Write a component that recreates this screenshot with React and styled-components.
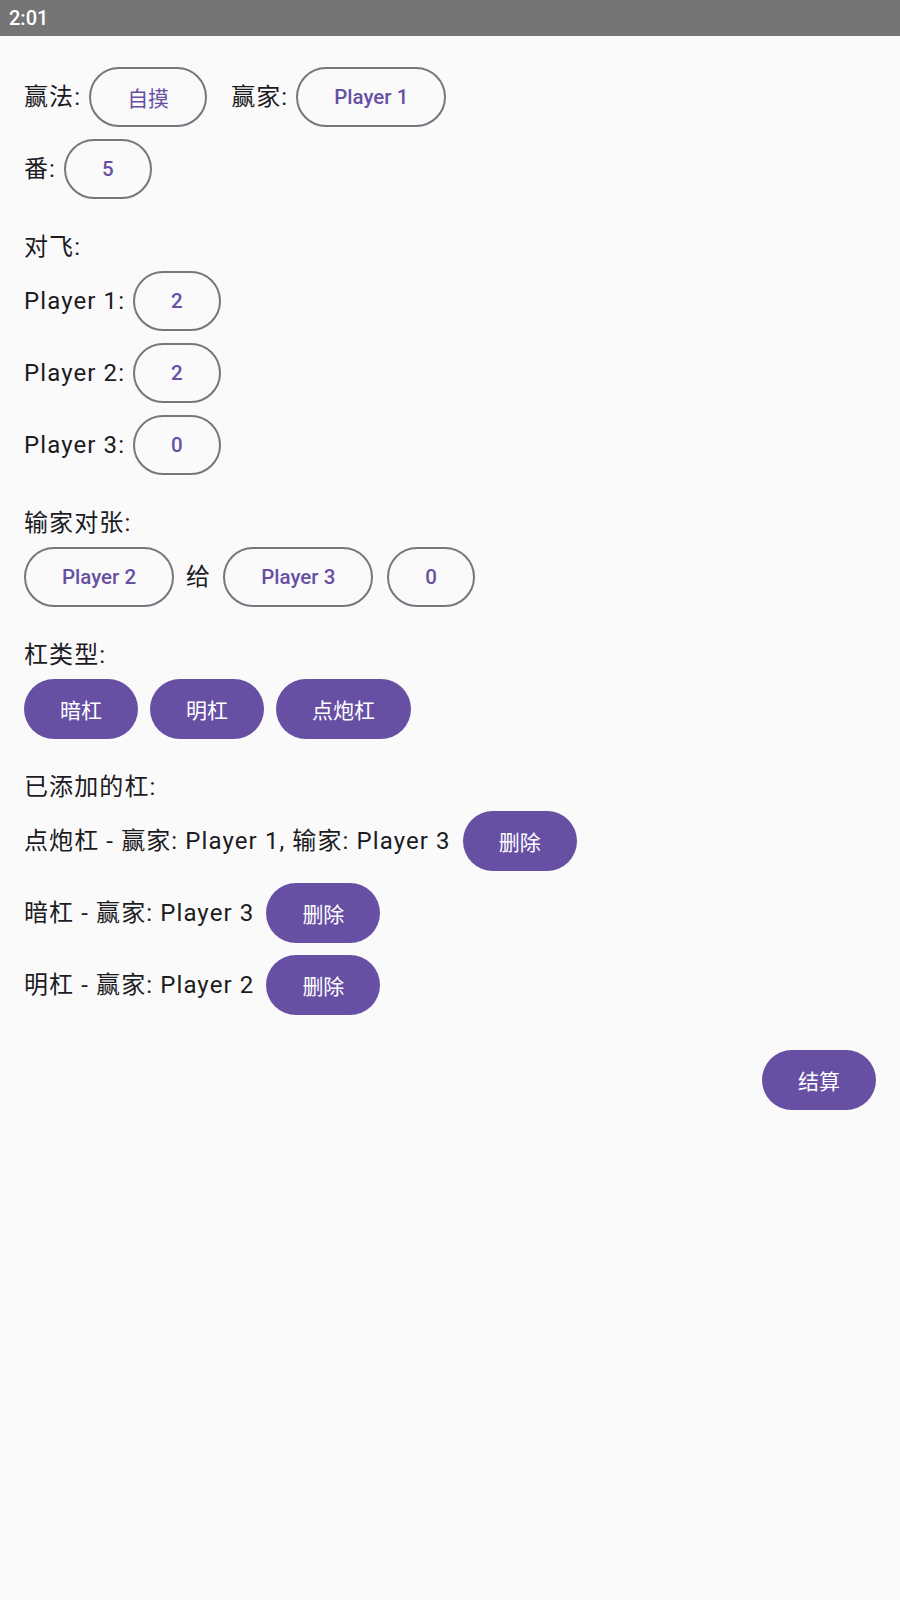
import React from 'react';
import styled, { createGlobalStyle } from 'styled-components';

const GlobalStyle = createGlobalStyle`
body {
  margin: 0;
  background-color: #fafafa;
  font-family: Roboto, "Noto Sans CJK SC", sans-serif;
}
`;

const Screen = styled.div`
width: 900px;
min-height: 1600px;
background-color: #fafafa;
`;

const StatusBar = styled.div`
height: 36px;
background-color: #757575;
color: #ffffff;
font-size: 20px;
font-weight: 500;
display: flex;
align-items: center;
padding-left: 9px;
`;

const Content = styled.div`
display: flex;
flex-direction: column;
padding: 31px 24px 0;
`;

const Row = styled.div`
display: flex;
align-items: center;
gap: ${(p) => p.gap || 12}px;
margin-top: ${(p) => p.top || 0}px;
`;

const Title = styled.div`
font-size: 24px;
line-height: 36px;
letter-spacing: 1.1px;
color: #1c1b1f;
margin-top: 30px;
margin-bottom: 6px;
`;

const Label = styled.span`
font-size: 24px;
line-height: 36px;
letter-spacing: 1.1px;
color: #1c1b1f;
margin-left: ${(p) => p.before || 0}px;
margin-right: ${(p) => p.after || 0}px;
`;

const Button = styled.button`
box-sizing: border-box;
height: 60px;
padding: 0 36px;
border-radius: 30px;
font-family: Roboto, "Noto Sans CJK SC", sans-serif;
font-size: ${(p) => (p.cjk ? 21 : 20.5)}px;
font-weight: ${(p) => (p.cjk ? 400 : 500)};
letter-spacing: 0;
white-space: nowrap;
cursor: pointer;
border: ${(p) => (p.filled ? 'none' : '2px solid #79747e')};
background-color: ${(p) => (p.filled ? '#6750a4' : 'transparent')};
color: ${(p) => (p.filled ? '#ffffff' : '#6750a4')};
margin-left: ${(p) => p.before || 0}px;
`;

const Footer = styled.div`
display: flex;
justify-content: flex-end;
margin-top: 35px;
`;

const flyScores = [
  { name: 'Player 1', value: 2 },
  { name: 'Player 2', value: 2 },
  { name: 'Player 3', value: 0 },
];

const kongTypes = ['暗杠', '明杠', '点炮杠'];

const addedKongs = [
  '点炮杠 - 赢家: Player 1, 输家: Player 3',
  '暗杠 - 赢家: Player 3',
  '明杠 - 赢家: Player 2',
];

const App = () => (
  <Screen>
    <GlobalStyle />
    <StatusBar>2:01</StatusBar>
    <Content>
      <Row gap={8}>
        <Label>赢法:</Label>
        <Button cjk>自摸</Button>
        <Label before={16}>赢家:</Label>
        <Button>Player 1</Button>
      </Row>
      <Row gap={8} top={12}>
        <Label>番:</Label>
        <Button>5</Button>
      </Row>

      <Title>对飞:</Title>
      {flyScores.map((s, i) => (
        <Row key={s.name} gap={8} top={i === 0 ? 0 : 12}>
          <Label>{s.name}:</Label>
          <Button>{s.value}</Button>
        </Row>
      ))}

      <Title>输家对张:</Title>
      <Row gap={12}>
        <Button>Player 2</Button>
        <Label>给</Label>
        <Button>Player 3</Button>
        <Button before={2}>0</Button>
      </Row>

      <Title>杠类型:</Title>
      <Row gap={12}>
        {kongTypes.map((k) => (
          <Button filled cjk key={k}>{k}</Button>
        ))}
      </Row>

      <Title>已添加的杠:</Title>
      {addedKongs.map((k, i) => (
        <Row key={k} gap={12} top={i === 0 ? 0 : 12}>
          <Label>{k}</Label>
          <Button filled cjk>删除</Button>
        </Row>
      ))}

      <Footer>
        <Button filled cjk>结算</Button>
      </Footer>
    </Content>
  </Screen>
);

export default App;
